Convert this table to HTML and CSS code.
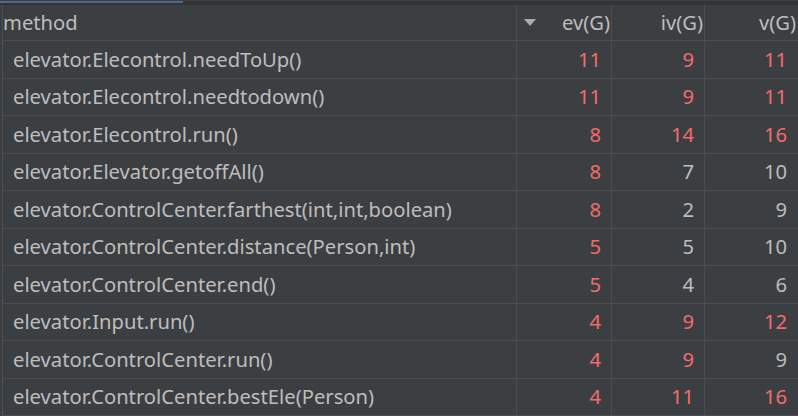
FILE: index.html
```html
<!DOCTYPE html>
<html>
<head>
<meta charset="utf-8">
<link rel="stylesheet" href="styles.css">
</head>
<body>
<div class="topbar"><div class="topbar-accent"></div></div>
<div class="table">
  <div class="row head">
    <div class="cell method">method</div>
    <div class="cell num sort"><span class="tri"></span><span>ev(G)</span></div>
    <div class="cell num">iv(G)</div>
    <div class="cell num last">v(G)</div>
  </div>
  <div class="row"><div class="cell method">elevator.Elecontrol.needToUp()</div><div class="cell num red">11</div><div class="cell num red">9</div><div class="cell num red last">11</div></div>
  <div class="row"><div class="cell method">elevator.Elecontrol.needtodown()</div><div class="cell num red">11</div><div class="cell num red">9</div><div class="cell num red last">11</div></div>
  <div class="row"><div class="cell method">elevator.Elecontrol.run()</div><div class="cell num red">8</div><div class="cell num red">14</div><div class="cell num red last">16</div></div>
  <div class="row"><div class="cell method">elevator.Elevator.getoffAll()</div><div class="cell num red">8</div><div class="cell num">7</div><div class="cell num last">10</div></div>
  <div class="row"><div class="cell method">elevator.ControlCenter.farthest(int,int,boolean)</div><div class="cell num red">8</div><div class="cell num">2</div><div class="cell num last">9</div></div>
  <div class="row"><div class="cell method">elevator.ControlCenter.distance(Person,int)</div><div class="cell num red">5</div><div class="cell num">5</div><div class="cell num last">10</div></div>
  <div class="row"><div class="cell method">elevator.ControlCenter.end()</div><div class="cell num red">5</div><div class="cell num">4</div><div class="cell num last">6</div></div>
  <div class="row"><div class="cell method">elevator.Input.run()</div><div class="cell num red">4</div><div class="cell num red">9</div><div class="cell num red last">12</div></div>
  <div class="row"><div class="cell method">elevator.ControlCenter.run()</div><div class="cell num red">4</div><div class="cell num red">9</div><div class="cell num last">9</div></div>
  <div class="row"><div class="cell method">elevator.ControlCenter.bestEle(Person)</div><div class="cell num red">4</div><div class="cell num red">11</div><div class="cell num red last">16</div></div>
</div>
</body>
</html>
```
FILE: styles.css
```css
html, body {
  margin: 0;
  padding: 0;
  background: #3c3f41;
  width: 798px;
  height: 416px;
  overflow: hidden;
}
body {
  font-family: "Noto Sans", "Open Sans", sans-serif;
  font-size: 20.2px;
  color: #bdbdbd;
}
.topbar {
  height: 4px;
  background: #323436;
}
.topbar-accent {
  width: 183px;
  height: 2px;
  margin-top: 1px;
  background: #4f6985;
}
.table {
  border-left: 1px solid #4b4e50;
  margin-left: 2px;
}
.row {
  display: grid;
  grid-template-columns: 514px 95px 93px 92px;
  height: 37.5px;
  box-sizing: border-box;
  border-bottom: 1px solid #4b4e50;
}
.row.head {
  height: 36px;
}
.cell {
  display: flex;
  align-items: center;
  border-right: 1px solid #4b4e50;
  white-space: nowrap;
  overflow: hidden;
  padding-bottom: 1px;
}
.cell.last {
  border-right: none;
}
.method {
  padding-left: 10px;
}
.head .method {
  padding-left: 0;
}
.num {
  justify-content: flex-end;
  padding-right: 10px;
}
.head .num {
  padding-right: 1px;
}
.head .sort {
  justify-content: space-between;
  padding-left: 7px;
}
.tri {
  width: 0;
  height: 0;
  border-left: 6px solid transparent;
  border-right: 6px solid transparent;
  border-top: 7px solid #a9abad;
}
.red {
  color: #f26b6b;
}
```
